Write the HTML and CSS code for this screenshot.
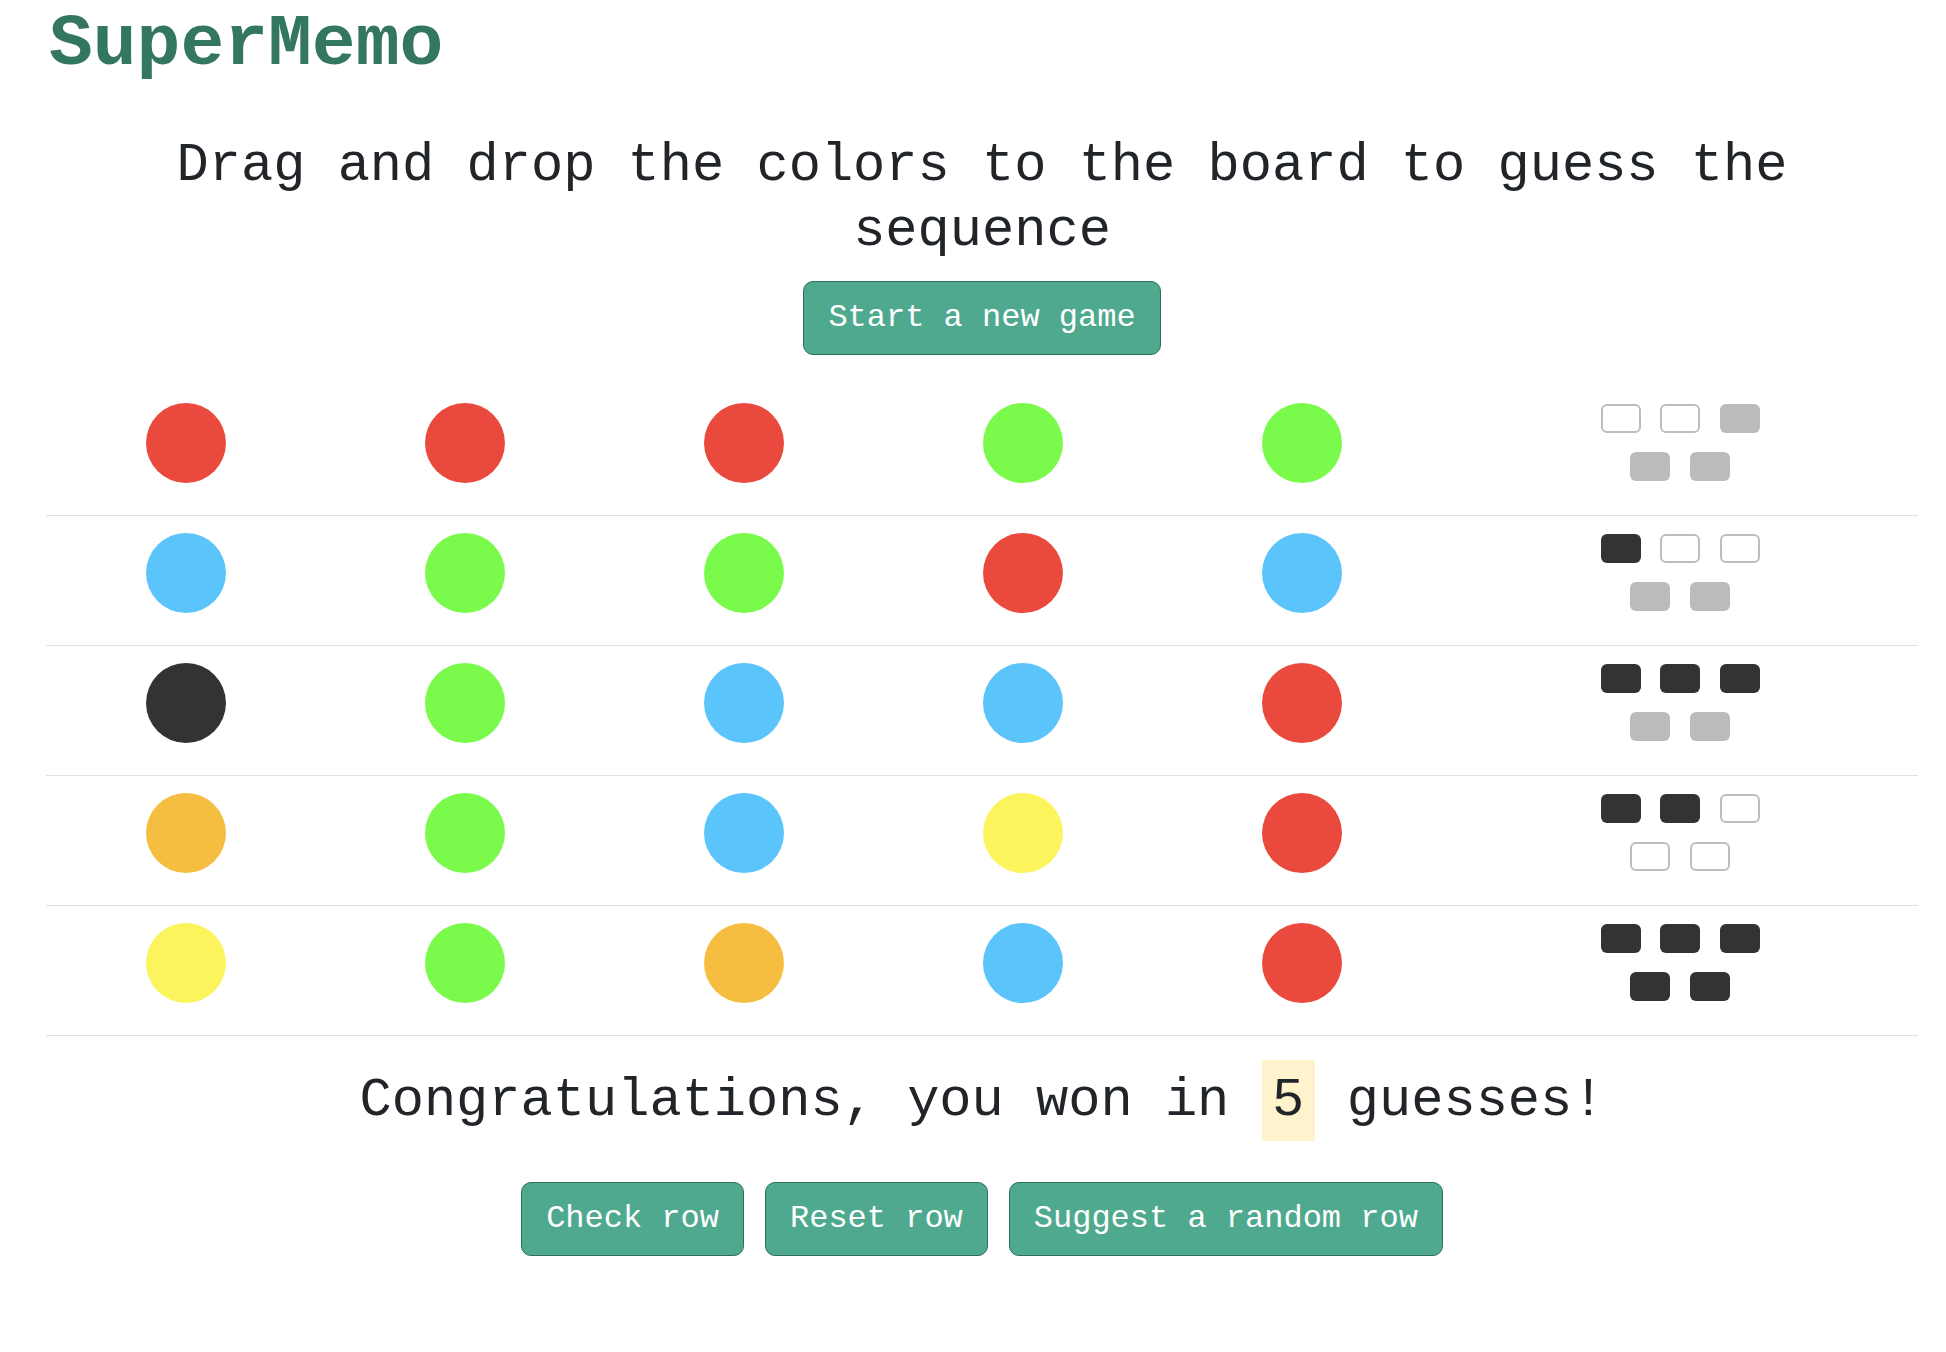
FILE: index.html
```html
<!DOCTYPE html>
<html lang="en">
<head>
<meta charset="utf-8">
<title>SuperMemo</title>
<link rel="stylesheet" href="styles.css">
</head>
<body>
<div class="page">
  <h1 class="logo">SuperMemo</h1>
  <h2 class="title">Drag and drop the colors to the board to guess the sequence</h2>
  <div class="center">
    <button class="btn">Start a new game</button>
  </div>

  <div class="board">
    <div class="row">
      <div class="cell"><span class="peg red"></span></div>
      <div class="cell"><span class="peg red"></span></div>
      <div class="cell"><span class="peg red"></span></div>
      <div class="cell"><span class="peg green"></span></div>
      <div class="cell"><span class="peg green"></span></div>
      <div class="hints">
        <div class="hint-row"><span class="hint empty"></span><span class="hint empty"></span><span class="hint gray"></span></div>
        <div class="hint-row"><span class="hint gray"></span><span class="hint gray"></span></div>
      </div>
    </div>
    <div class="row">
      <div class="cell"><span class="peg blue"></span></div>
      <div class="cell"><span class="peg green"></span></div>
      <div class="cell"><span class="peg green"></span></div>
      <div class="cell"><span class="peg red"></span></div>
      <div class="cell"><span class="peg blue"></span></div>
      <div class="hints">
        <div class="hint-row"><span class="hint dark"></span><span class="hint empty"></span><span class="hint empty"></span></div>
        <div class="hint-row"><span class="hint gray"></span><span class="hint gray"></span></div>
      </div>
    </div>
    <div class="row">
      <div class="cell"><span class="peg black"></span></div>
      <div class="cell"><span class="peg green"></span></div>
      <div class="cell"><span class="peg blue"></span></div>
      <div class="cell"><span class="peg blue"></span></div>
      <div class="cell"><span class="peg red"></span></div>
      <div class="hints">
        <div class="hint-row"><span class="hint dark"></span><span class="hint dark"></span><span class="hint dark"></span></div>
        <div class="hint-row"><span class="hint gray"></span><span class="hint gray"></span></div>
      </div>
    </div>
    <div class="row">
      <div class="cell"><span class="peg orange"></span></div>
      <div class="cell"><span class="peg green"></span></div>
      <div class="cell"><span class="peg blue"></span></div>
      <div class="cell"><span class="peg yellow"></span></div>
      <div class="cell"><span class="peg red"></span></div>
      <div class="hints">
        <div class="hint-row"><span class="hint dark"></span><span class="hint dark"></span><span class="hint empty"></span></div>
        <div class="hint-row"><span class="hint empty"></span><span class="hint empty"></span></div>
      </div>
    </div>
    <div class="row">
      <div class="cell"><span class="peg yellow"></span></div>
      <div class="cell"><span class="peg green"></span></div>
      <div class="cell"><span class="peg orange"></span></div>
      <div class="cell"><span class="peg blue"></span></div>
      <div class="cell"><span class="peg red"></span></div>
      <div class="hints">
        <div class="hint-row"><span class="hint dark"></span><span class="hint dark"></span><span class="hint dark"></span></div>
        <div class="hint-row"><span class="hint dark"></span><span class="hint dark"></span></div>
      </div>
    </div>
  </div>

  <p class="result">Congratulations, you won in <mark class="count">5</mark> guesses!</p>

  <div class="actions">
    <button class="btn">Check row</button>
    <button class="btn">Reset row</button>
    <button class="btn">Suggest a random row</button>
  </div>
</div>
</body>
</html>
```

FILE: styles.css
```css
html, body {
  margin: 0;
  padding: 0;
  background: #ffffff;
}

body {
  font-family: "Liberation Mono", "Courier New", monospace;
  color: #212529;
}

.page {
  padding: 0 28px 0 46px;
}

.logo {
  margin: 0;
  padding: 8px 0 0 3px;
  height: 73px;
  font-size: 73px;
  line-height: 73px;
  font-weight: bold;
  color: #337662;
}

.title {
  margin: 53px 0 0;
  font-size: 53.7px;
  line-height: 64.8px;
  font-weight: normal;
  text-align: center;
}

.center {
  margin-top: 17px;
  display: flex;
  justify-content: center;
}

.btn {
  font-family: "Liberation Mono", "Courier New", monospace;
  font-size: 32px;
  line-height: 48px;
  padding: 12px 24px;
  color: #ffffff;
  background: #4ea98e;
  border: 1px solid #2d6f5d;
  border-radius: 10px;
  cursor: pointer;
}

.board {
  margin-top: 31px;
}

.row {
  display: grid;
  grid-template-columns: repeat(5, 279px) 1fr;
  padding: 17px 0 32px;
  border-bottom: 1px solid #dee2e6;
}

.cell {
  display: flex;
  justify-content: center;
  align-items: center;
  height: 80px;
}

.peg {
  width: 80px;
  height: 80px;
  border-radius: 50%;
  display: block;
}

.red { background: #ea4a3e; }
.green { background: #7afb4b; }
.blue { background: #5bc5fb; }
.black { background: #333333; }
.orange { background: #f5be41; }
.yellow { background: #fcf45d; }

.hints {
  display: flex;
  flex-direction: column;
  justify-content: center;
  align-items: center;
  gap: 19px;
  height: 80px;
  padding-left: 1px;
}

.hint-row {
  display: flex;
  gap: 19.5px;
}

.hint {
  width: 40px;
  height: 29px;
  border-radius: 6px;
  box-sizing: border-box;
  display: block;
}

.hint.empty {
  border: 2px solid #bdbdbd;
  background: #ffffff;
}

.hint.gray { background: #bbbbbb; }
.hint.dark { background: #333333; }

.result {
  margin: 24px 0 0;
  font-size: 53.7px;
  line-height: 81px;
  text-align: center;
}

.count {
  display: inline-block;
  background: #fff3cd;
  color: #212529;
  padding: 0 10.4px;
  line-height: 81px;
}

.actions {
  margin-top: 41px;
  display: flex;
  justify-content: center;
  gap: 21px;
}
```
